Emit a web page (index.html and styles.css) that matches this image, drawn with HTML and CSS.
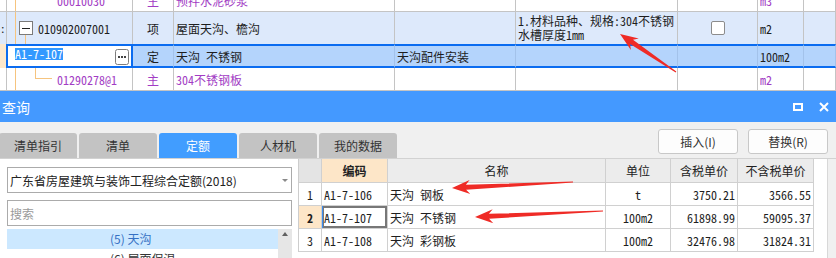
FILE: index.html
```html
<!DOCTYPE html>
<html lang="zh-CN">
<head>
    <meta charset="UTF-8">
    <meta name="viewport" content="width=device-width, initial-scale=1.0">
    <title>查询</title>
    <link rel="stylesheet" href="styles.css">
</head>
<body>

<div class="sheet">
    <div class="sheet-rows">
        <div class="row">
            <div class="cell lead"></div>
            <div class="cell code tree-top"><span class="purple">00010030</span></div>
            <div class="cell type purple">主</div>
            <div class="cell name purple">预拌水泥砂浆</div>
            <div class="cell"></div>
            <div class="cell"></div>
            <div class="cell"></div>
            <div class="cell unit purple">m3</div>
            <div class="cell"></div>
        </div>
        <div class="row row-item">
            <div class="cell lead">:</div>
            <div class="cell code tree-item">
                <span class="fold"></span>
                <span>010902007001</span>
            </div>
            <div class="cell type">项</div>
            <div class="cell name">屋面天沟、檐沟</div>
            <div class="cell"></div>
            <div class="cell spec">1.材料品种、规格:304不锈钢<br>水槽厚度1mm</div>
            <div class="cell check"><span class="box"></span></div>
            <div class="cell unit">m2</div>
            <div class="cell"></div>
        </div>
        <div class="row row-current">
            <div class="cell lead"></div>
            <div class="cell editor">
                <span class="picked">A1-7-107</span>
                <span class="more">
                    <svg width="14" height="16" viewBox="0 0 14 16">
                        <rect x="0.5" y="0.5" width="13" height="15" rx="2" fill="#fff" stroke="#7d7d7d"/>
                        <rect x="3" y="7" width="2" height="2" fill="#444"/>
                        <rect x="6" y="7" width="2" height="2" fill="#444"/>
                        <rect x="9" y="7" width="2" height="2" fill="#444"/>
                    </svg>
                </span>
            </div>
            <div class="cell type">定</div>
            <div class="cell name">天沟 不锈钢</div>
            <div class="cell name">天沟配件安装</div>
            <div class="cell"></div>
            <div class="cell"></div>
            <div class="cell unit">100m2</div>
            <div class="cell"></div>
        </div>
        <div class="row">
            <div class="cell lead"></div>
            <div class="cell code tree-sub"><span class="purple">01290278@1</span></div>
            <div class="cell type purple">主</div>
            <div class="cell name purple">304不锈钢板</div>
            <div class="cell"></div>
            <div class="cell"></div>
            <div class="cell"></div>
            <div class="cell unit purple">m2</div>
            <div class="cell"></div>
        </div>
    </div>
</div>

<div class="dialog">
    <div class="titlebar">
        <span class="title">查询</span>
        <span class="win-btns">
            <svg width="10" height="8" viewBox="0 0 10 8">
                <rect x="1" y="1" width="8" height="6" fill="none" stroke="#fff" stroke-width="2"/>
            </svg>
            <svg width="10" height="10" viewBox="0 0 10 10">
                <path d="M1 1L9 9M9 1L1 9" stroke="#fff" stroke-width="2"/>
            </svg>
        </span>
    </div>

    <div class="toolbar">
        <div class="tabs">
            <div class="tab">清单指引</div>
            <div class="tab">清单</div>
            <div class="tab active">定额</div>
            <div class="tab">人材机</div>
            <div class="tab">我的数据</div>
        </div>
        <div class="actions">
            <button>插入(I)</button>
            <button>替换(R)</button>
        </div>
    </div>

    <div class="content">
        <div class="side">
            <div class="select">
                <span>广东省房屋建筑与装饰工程综合定额(2018)</span>
                <span class="caret"></span>
            </div>
            <input class="search" type="text" placeholder="搜索">
            <div class="tree">
                <div class="tree-rows">
                    <div class="tree-row selected">(5) 天沟</div>
                    <div class="tree-row">(6) 屋面保温</div>
                </div>
                <div class="scroll"><span class="up"></span></div>
            </div>
        </div>

        <div class="quota">
            <div class="grid">
                <div class="hd rn"></div>
                <div class="hd key">编码</div>
                <div class="hd">名称</div>
                <div class="hd">单位</div>
                <div class="hd">含税单价</div>
                <div class="hd">不含税单价</div>

                <div class="td rn">1</div>
                <div class="td">A1-7-106</div>
                <div class="td">天沟 钢板</div>
                <div class="td mid">t</div>
                <div class="td num">3750.21</div>
                <div class="td num">3566.55</div>

                <div class="td rn on">2</div>
                <div class="td focus">A1-7-107</div>
                <div class="td">天沟 不锈钢</div>
                <div class="td mid">100m2</div>
                <div class="td num">61898.99</div>
                <div class="td num">59095.37</div>

                <div class="td rn">3</div>
                <div class="td">A1-7-108</div>
                <div class="td">天沟 彩钢板</div>
                <div class="td mid">100m2</div>
                <div class="td num">32476.98</div>
                <div class="td num">31824.31</div>
            </div>
            <div class="filler"></div>
            <div class="strip"></div>
        </div>
    </div>
</div>

<svg class="marks" width="836" height="258" viewBox="0 0 836 258">
    <polygon points="620,34 630.9,49.9 630.1,44 675.7,72.5 676.3,71.5 633,39.8 638.8,38.4"/>
    <polygon points="452,188 470.3,194.1 466.1,189.8 573,182.6 573,181.4 465.9,184.8 469.6,180.1"/>
    <polygon points="475,217 493.3,223.2 489.1,218.8 603,211.6 603,210.4 488.9,213.8 492.7,209.2"/>
</svg>

</body>
</html>
```

FILE: styles.css
```css
* {
    box-sizing: border-box;
}

body {
    margin: 0;
    width: 836px;
    height: 258px;
    overflow: hidden;
    position: relative;
    background-color: #f0f0f0;
    font-family: "Noto Sans CJK SC", "Liberation Sans", sans-serif;
    font-size: 12px;
    color: #333;
}

/* upper sheet */
.sheet {
    height: 91px;
    overflow: hidden;
    background-color: #fff;
    font-family: "Noto Sans Mono CJK SC", "Liberation Mono", "Noto Sans CJK SC", monospace;
    color: #1e1e1e;
    line-height: 13px;
}

.sheet-rows {
    margin-top: -11px;
}

.row {
    display: grid;
    grid-template-columns: 7px 126px 41px 221px 121px 162px 80px 46px 1fr;
    height: 23px;
}

.cell {
    display: flex;
    align-items: center;
    white-space: nowrap;
    overflow: hidden;
    border-right: 1px solid #c4c4c4;
    border-bottom: 1px solid #c4c4c4;
}

.purple {
    color: #a23cc4;
}

.type {
    justify-content: center;
}

.name,
.spec {
    padding-left: 2px;
}

.unit {
    padding-left: 2px;
}

.lead {
    font-size: 11px;
}

.tree-top {
    padding-left: 50px;
    background: linear-gradient(#f6c47f, #f6c47f) 8px 0 / 1px 100% no-repeat;
}

.tree-item {
    padding-left: 12px;
    background:
        linear-gradient(#f6c47f, #f6c47f) 8px 0 / 1px 100% no-repeat,
        linear-gradient(#f6c47f, #f6c47f) 18px 22px / 1px 10px no-repeat;
}

.tree-sub {
    padding-left: 50px;
    background:
        linear-gradient(#f6c47f, #f6c47f) 8px 0 / 1px 100% no-repeat,
        linear-gradient(#f6c47f, #f6c47f) 28px 0 / 1px 11px no-repeat,
        linear-gradient(#f6c47f, #f6c47f) 28px 10px / 17px 1px no-repeat;
}

.fold {
    width: 14px;
    height: 14px;
    margin-right: 5px;
    border: 1px solid #7a7a7a;
    background: #fff linear-gradient(#222, #222) center / 8px 1px no-repeat;
}

.row-item {
    height: 32px;
    background-color: #dde9fb;
}

.row-item .cell {
    border-bottom: none;
}

.spec {
    white-space: normal;
    line-height: 14px;
}

.check {
    justify-content: center;
}

.box {
    width: 14px;
    height: 14px;
    border: 1px solid #8c8c8c;
    border-radius: 2px;
    background-color: #fff;
}

.row-current {
    grid-template-columns: 6px 127px 41px 221px 121px 162px 80px 46px 1fr;
    height: 24px;
    background-color: #b4d4fc;
}

.row-current .cell {
    border-top: 2px solid #0b6cf0;
    border-bottom: 2px solid #0b6cf0;
    border-right-color: #a3c2ea;
}

.row-current .lead {
    border: none;
    background-color: #fde8cc;
}

.row-current .editor {
    border: 2px solid #0b6cf0;
    background-color: #fff;
    padding-left: 7px;
    align-items: flex-start;
    padding-top: 2px;
}

.picked {
    background-color: #3399ff;
    color: #fff;
    line-height: 12px;
}

.more {
    display: flex;
    margin-left: auto;
    margin-right: 2px;
    margin-top: 1px;
}

/* query dialog */
.titlebar {
    display: flex;
    align-items: center;
    height: 31px;
    padding: 0 7px 0 2px;
    background-color: #4499ff;
    color: #fff;
    font-size: 14px;
}

.win-btns {
    display: flex;
    align-items: center;
    gap: 16px;
    margin-left: auto;
}

.toolbar {
    display: flex;
    height: 36px;
}

.tabs {
    display: flex;
    align-self: flex-end;
    gap: 2px;
    margin-left: -1px;
}

.tab {
    width: 78px;
    height: 25px;
    line-height: 25px;
    text-align: center;
    background-color: #c3c3c3;
    border-radius: 3px 3px 0 0;
    color: #333;
}

.tab.active {
    background-color: #419dff;
    color: #fff;
}

.actions {
    display: flex;
    gap: 10px;
    margin: 7px 8px 0 auto;
    align-self: flex-start;
}

.actions button {
    width: 80px;
    height: 25px;
    padding: 0;
    background-color: #fdfdfd;
    border: 1px solid #c8c8c8;
    border-radius: 3px;
    font-family: "Noto Sans CJK SC", "Liberation Sans", sans-serif;
    font-size: 12px;
    color: #333;
}

.content {
    display: flex;
    height: 100px;
    border-top: 1px solid #d2d2d2;
}

.side {
    width: 298px;
    padding: 8px 6px 0 7px;
    background-color: #fff;
}

.select {
    display: flex;
    align-items: center;
    height: 26px;
    padding-left: 2px;
    border: 1px solid #ababab;
    color: #222;
}

.caret {
    margin: 0 3px 0 auto;
    border-left: 3px solid transparent;
    border-right: 3px solid transparent;
    border-top: 3px solid #8a8a8a;
}

.search {
    display: block;
    width: 100%;
    height: 26px;
    margin-top: 7px;
    padding: 0 0 0 2px;
    border: 1px solid #ababab;
    font-family: "Noto Sans CJK SC", "Liberation Sans", sans-serif;
    font-size: 12px;
    outline: none;
}

.search::placeholder {
    color: #9a9a9a;
}

.tree {
    display: flex;
    margin-top: 3px;
}

.tree-rows {
    flex: 1;
}

.tree-row {
    height: 20px;
    line-height: 20px;
    padding-left: 103px;
    color: #333;
}

.tree-row.selected {
    background-color: #cce8ff;
    color: #3571c4;
}

.scroll {
    width: 14px;
    height: 40px;
    padding: 3px 0 0 4px;
    background-color: #e6e6e6;
}

.up {
    display: block;
    width: 0;
    border-left: 3px solid transparent;
    border-right: 3px solid transparent;
    border-bottom: 4px solid #606060;
}

.quota {
    flex: 1;
    display: flex;
    background-color: #fff;
}

.grid {
    display: grid;
    grid-template-columns: 23px 66px 218px 65px 67px 76px;
    grid-template-rows: 24px 23px 23px 23px;
    align-self: flex-start;
    border-left: 1px solid #cdcdcd;
    font-family: "Noto Sans Mono CJK SC", "Liberation Mono", "Noto Sans CJK SC", monospace;
    color: #1e1e1e;
}

.hd,
.td {
    display: flex;
    align-items: center;
    white-space: nowrap;
    border-right: 1px solid #d0d0d0;
    border-bottom: 1px solid #d0d0d0;
}

.hd {
    justify-content: center;
    background-color: #ececec;
    font-family: "Noto Sans CJK SC", "Liberation Sans", sans-serif;
    color: #222;
}

.hd.rn {
    background-color: #e4e4e4;
}

.hd.key {
    background-color: #fde6c8;
    font-weight: bold;
}

.td {
    padding: 0 2px;
}

.td.rn,
.td.mid {
    justify-content: center;
}

.td.num {
    justify-content: flex-end;
}

.td.on {
    background-color: #fde6c8;
    font-weight: bold;
}

.td.focus {
    box-shadow: inset 1px 0 0 #3d8ef0, inset 0 0 0 2px #777;
}

.filler {
    width: 14px;
    border-right: 1px solid #d8d8d8;
}

.strip {
    flex: 1;
    background-color: #f0f0f0;
}

/* annotation arrows drawn over the screenshot */
.marks {
    position: absolute;
    top: 0;
    left: 0;
    pointer-events: none;
    fill: #ef2b26;
}
```
